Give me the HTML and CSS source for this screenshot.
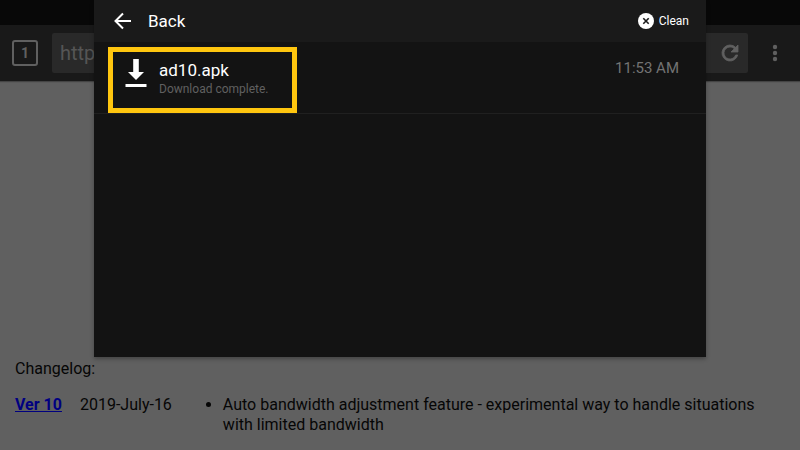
FILE: index.html
```
<!DOCTYPE html>
<html lang="en">
<head>
  <meta charset="UTF-8">
  <meta name="viewport" content="width=device-width, initial-scale=1.0">
  <title>Downloads</title>
  <link rel="stylesheet" href="styles.css">
</head>
<body>
  <!-- Browser behind the panel -->
  <div class="status-bar"></div>
  <div class="toolbar">
    <button class="tabs" aria-label="Tabs">1</button>
    <div class="address">
      <input class="url" type="text" value="http://" aria-label="Address">
      <button class="icon-btn" aria-label="Reload">
        <svg width="24" height="24" viewBox="0 0 24 24">
          <path d="M17.65 6.35A7.96 7.96 0 0 0 12 4a8 8 0 1 0 7.73 10h-2.08A6 6 0 1 1 12 6c1.66 0 3.14.69 4.22 1.78L13 11h7V4z" stroke="#606060" stroke-width="0.8"/>
        </svg>
      </button>
    </div>
    <button class="icon-btn menu" aria-label="Menu">
      <svg width="6" height="18" viewBox="0 0 6 18">
        <circle cx="3" cy="3" r="2.200"/>
        <circle cx="3" cy="9" r="2.200"/>
        <circle cx="3" cy="15" r="2.200"/>
      </svg>
    </button>
  </div>

  <main class="page">
    <p>Changelog:</p>
    <table class="changelog">
      <tr>
        <td class="version"><a href="#ver10">Ver 10</a></td>
        <td class="date">2019-July-16</td>
        <td>
          <ul>
            <li>Auto bandwidth adjustment feature - experimental way to handle situations with limited bandwidth</li>
          </ul>
        </td>
      </tr>
    </table>
  </main>

  <!-- Downloads panel -->
  <section class="panel">
    <header class="panel-header">
      <button class="back">
        <svg width="18" height="18" viewBox="0 0 18 18">
          <path d="M17 9H2M9 1.5L1.5 9L9 16.5" fill="none" stroke="#fff" stroke-width="2"/>
        </svg>
        Back
      </button>
      <button class="clean">
        <svg width="16" height="16" viewBox="0 0 16 16">
          <circle cx="8" cy="8" r="8" fill="#fff"/>
          <path d="M5.3 5.3l5.4 5.4M10.7 5.3l-5.4 5.4" stroke="#1a1a1a" stroke-width="1.6"/>
        </svg>
        Clean
      </button>
    </header>
    <div class="download">
      <div class="file">
        <svg width="22" height="30" viewBox="0 0 22 30">
          <path d="M8.200 0h5.600v13h5.200L11 21 3 13h5.200zM.5 25h21v3H.5z" fill="#fff"/>
        </svg>
        <div>
          <div class="file-name">ad10.apk</div>
          <div class="file-status">Download complete.</div>
        </div>
      </div>
      <span class="time">11:53 AM</span>
    </div>
  </section>
</body>
</html>
```

FILE: styles.css
```
* {
  box-sizing: border-box;
}

body {
  margin: 0;
  min-height: 100vh;
  background-color: #606060;
  color: #060606;
  font-family: Roboto, "Liberation Sans", sans-serif;
  font-size: 16px;
  line-height: 20px;
}

button {
  padding: 0;
  border: none;
  background: none;
  color: inherit;
  font-family: inherit;
  cursor: pointer;
}

svg {
  display: block;
  flex: none;
}

/* Browser chrome */
.status-bar {
  height: 25px;
  background-color: #080808;
}

.toolbar {
  display: flex;
  align-items: center;
  height: 56px;
  padding: 0 12px;
  background-color: #191919;
  box-shadow: 0 1px 1px #444;
  color: #606060;
}

.tabs {
  width: 26px;
  height: 26px;
  border: 2px solid #606060;
  border-radius: 3px;
  font-size: 14px;
  font-weight: bold;
}

.address {
  display: flex;
  flex: 1;
  height: 40px;
  margin: 0 14px;
  background-color: #292929;
  border-radius: 2px;
}

.url {
  flex: 1;
  min-width: 0;
  padding: 0 8px;
  border: none;
  background: none;
  color: #555;
  font-family: inherit;
  font-size: 20px;
}

.icon-btn {
  width: 36px;
  display: flex;
  align-items: center;
  justify-content: center;
  fill: #606060;
}

.menu {
  width: 26px;
}

/* Page text */
.page {
  padding: 278px 16px 16px 15px;
}

.page p {
  margin: 0 0 16px;
}

.changelog {
  border-collapse: collapse;
}

.changelog td {
  padding: 0;
  vertical-align: top;
}

.changelog .version {
  padding-right: 18px;
  font-weight: bold;
  white-space: nowrap;
}

.changelog .date {
  padding-right: 11px;
  white-space: nowrap;
}

.changelog ul {
  margin: 0;
  padding-left: 40px;
}

.changelog a {
  color: #000080;
}

/* Downloads panel */
.panel {
  position: absolute;
  top: 0;
  left: 50%;
  transform: translateX(-50%);
  width: 76.5%;
  min-height: 357px;
  background-color: #131313;
  box-shadow: 0 2px 4px rgba(0, 0, 0, 0.3);
  color: white;
}

.panel-header {
  display: flex;
  align-items: center;
  justify-content: space-between;
  height: 42px;
  padding: 0 17px 0 20px;
  background-color: #1a1a1a;
}

.back,
.clean {
  display: flex;
  align-items: center;
}

.back {
  gap: 16px;
  font-size: 17px;
}

.clean {
  gap: 5px;
  font-size: 12px;
}

.download {
  display: flex;
  align-items: flex-start;
  justify-content: space-between;
  padding: 5px 27px 0 14px;
  border-bottom: 1px solid #202020;
}

.file {
  display: flex;
  gap: 12px;
  width: 189px;
  height: 66px;
  padding: 7px 7px 0 12px;
  border: 5px solid #ffc60f;
}

.file-name {
  font-size: 17px;
  line-height: 22px;
}

.file-status {
  color: #606060;
  font-size: 12px;
  line-height: 16px;
}

.time {
  margin-top: 11px;
  color: #737373;
  font-size: 15px;
}
```
